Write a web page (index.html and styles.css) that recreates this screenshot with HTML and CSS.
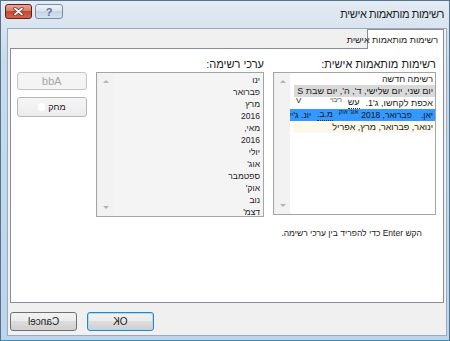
FILE: index.html
```html
<!DOCTYPE html>
<html lang="he" dir="rtl">
<head>
    <meta charset="UTF-8">
    <title>רשימות מותאמות אישית</title>
    <link rel="stylesheet" href="styles.css">
</head>
<body>
    <div class="window">
        <div class="titlebar">
            <span class="title">רשימות מותאמות אישית</span>
            <div class="caption-buttons">
                <div class="cap-btn cap-help">?</div>
                <div class="cap-btn cap-close">
                    <svg width="11" height="9" viewBox="0 0 11 9">
                        <path d="M2 1.5 L9 7.5 M9 1.5 L2 7.5" stroke="#6b2a20" stroke-width="3.2" stroke-linecap="round"/>
                        <path d="M2 1.5 L9 7.5 M9 1.5 L2 7.5" stroke="#fff" stroke-width="1.8" stroke-linecap="round"/>
                    </svg>
                </div>
            </div>
        </div>

        <div class="client">
            <div class="tabs">
                <div class="tab">רשימות מותאמות אישית</div>
            </div>

            <div class="panel">
                <div class="panel-grid">
                    <div class="column">
                        <div class="field-label">רשימות מותאמות אישית:</div>
                        <div class="listbox custom-lists">
                            <div class="items">
                                <div class="row">רשימה חדשה</div>
                                <div class="row row-grey">יום שני, יום שלישי, ד', ה', יום שבת S</div>
                                <div class="row row-mixed">
                                    <span>אכפת לקחשו, ג'1.</span>
                                    <span class="under">עש</span>
                                    <span class="sup">ריבוי</span>
                                    <span class="sup tick">V</span>
                                </div>
                                <div class="row row-mixed row-selected">
                                    <span class="first">יאן.</span>
                                    <span class="tight">פברואר, 2018</span>
                                    <span class="sup">אוג' אוק</span>
                                    <span class="under">מ.ב.</span>
                                    <span>יונ. ג'יי</span>
                                </div>
                                <div class="row row-cream">ינואר, פברואר, מרץ, אפריל</div>
                            </div>
                            <div class="scrollbar">
                                <span class="arrow-up"></span>
                                <span class="arrow-down"></span>
                            </div>
                        </div>
                        <div class="hint">הקש Enter כדי להפריד בין ערכי רשימה.</div>
                    </div>

                    <div class="column">
                        <div class="field-label">ערכי רשימה:</div>
                        <div class="listbox entries">
                            <div class="items entry-items">
                                <div class="row">ינו</div>
                                <div class="row">פברואר</div>
                                <div class="row">מרץ</div>
                                <div class="row">2016</div>
                                <div class="row">מאי,</div>
                                <div class="row">2016</div>
                                <div class="row">יולי</div>
                                <div class="row">אוג'</div>
                                <div class="row">ספטמבר</div>
                                <div class="row">אוק'</div>
                                <div class="row">נוב</div>
                                <div class="row">דצמ'</div>
                            </div>
                            <div class="scrollbar">
                                <span class="arrow-up"></span>
                                <span class="arrow-down"></span>
                            </div>
                        </div>
                    </div>

                    <div class="column side-buttons">
                        <button class="btn btn-disabled"><span class="mirror">Add</span></button>
                        <button class="btn btn-flat"><span class="blob"></span>מחק</button>
                    </div>
                </div>
            </div>

            <div class="footer">
                <button class="btn btn-default"><span class="mirror">OK</span></button>
                <button class="btn"><span class="mirror">Cancel</span></button>
            </div>
        </div>
    </div>
</body>
</html>
```

FILE: styles.css
```css
* {
    box-sizing: border-box;
}
body {
    margin: 0;
    width: 450px;
    height: 341px;
    overflow: hidden;
    font-family: "Liberation Sans", "Noto Sans Hebrew", sans-serif;
    color: #1a1a1a;
    background-color: #c2d8ec;
}
.window {
    height: 341px;
    display: flex;
    flex-direction: column;
    border: 1px solid #56728c;
    border-bottom-color: #2f8fb8;
    background: linear-gradient(#e3ebf3, #d8e4f0 27px, #c6dbee 60px, #bcd5ec);
}
.titlebar {
    height: 27px;
    flex-shrink: 0;
    display: flex;
    align-items: flex-start;
    padding: 0 5px 0 4px;
}
.title {
    font-size: 11px;
    letter-spacing: -0.4px;
    margin-top: 7px;
    color: #1e1e1e;
}
.caption-buttons {
    margin-right: auto;
    margin-top: 3px;
    display: flex;
    gap: 3px;
}
.cap-btn {
    width: 28px;
    height: 15px;
    border: 1px solid #7a8ea3;
    border-radius: 3px;
    display: flex;
    align-items: center;
    justify-content: center;
}
.cap-help {
    background: linear-gradient(#eef3f8, #dbe5ef 45%, #c6d6e6 50%, #d5e1ed);
    color: #5b718a;
    font-size: 11px;
    font-weight: bold;
}
.cap-close {
    width: 27px;
    border-color: #5c2219;
    background: linear-gradient(#eaa899, #d97b68 45%, #c7472f 50%, #d4644c);
}
.client {
    height: 308px;
    margin: 0 2px 0 6px;
    padding: 0 2px;
    background-color: #f0f0f0;
    border: 1px solid #9aabbd;
}
.tabs {
    display: flex;
}
.tab {
    width: 77px;
    height: 20px;
    margin-bottom: -1px;
    position: relative;
    z-index: 1;
    padding: 5px 5px 0 0;
    background-color: #fff;
    border: 1px solid #898c95;
    border-bottom: none;
    font-size: 9px;
    white-space: nowrap;
}
.panel {
    height: 255px;
    padding: 9px 7px 0 5px;
    background-color: #fff;
    border: 1px solid #898c95;
}
.panel-grid {
    display: grid;
    grid-template-columns: 163px 168px 70px;
    column-gap: 9px;
    align-items: start;
}
.column {
    display: flex;
    flex-direction: column;
}
.field-label {
    height: 14px;
    font-size: 11px;
    line-height: 13px;
    white-space: nowrap;
}
.listbox {
    display: flex;
    border: 1px solid #a5a5a5;
    background-color: #fff;
}
.custom-lists {
    height: 143px;
}
.entries {
    height: 145px;
    background-color: #f4f4f4;
}
.items {
    flex: 1;
    min-width: 0;
    font-size: 9px;
}
.row {
    height: 12px;
    line-height: 12px;
    padding-right: 2px;
    white-space: nowrap;
}
.entry-items {
    font-size: 8.5px;
    padding-top: 1px;
}
.entry-items .row {
    padding-right: 3px;
}
.row-grey {
    margin-left: 4px;
    background-color: #d9d9d9;
}
.row-selected {
    background-color: #3399ff;
    color: #101820;
    font-size: 8.5px;
}
.row-cream {
    margin-left: 3px;
    background-color: #fcf8ec;
}
.row-mixed {
    display: flex;
    align-items: flex-start;
    overflow: hidden;
}
.row-mixed span {
    margin-left: 6px;
    flex-shrink: 0;
}
.row-mixed .first {
    margin-left: 9px;
}
.row-mixed .tight {
    margin-left: 3px;
}
.under {
    border-bottom: 1px dotted #333;
    line-height: 11px;
}
.sup {
    font-size: 6px;
    line-height: 7px;
}
.tick {
    margin-right: auto;
    font-size: 8px;
}
.scrollbar {
    width: 16px;
    flex-shrink: 0;
    display: flex;
    flex-direction: column;
    justify-content: space-between;
    align-items: center;
    padding: 7px 0 7px;
    background-color: #f2f2f2;
    border-left: 1px solid #ececec;
}
.arrow-up {
    border: 3px solid transparent;
    border-top: none;
    border-bottom: 3px solid #b4b4b4;
}
.arrow-down {
    border: 3px solid transparent;
    border-bottom: none;
    border-top: 3px solid #b4b4b4;
}
.hint {
    margin-top: 12px;
    padding-right: 14px;
    font-size: 8.5px;
    line-height: 12px;
    white-space: nowrap;
}
.side-buttons {
    padding-top: 14px;
    gap: 7px;
}
.btn {
    height: 19px;
    padding: 0;
    border: 1px solid #707070;
    border-radius: 3px;
    background: linear-gradient(#f2f2f2, #ebebeb 50%, #dddddd 50%, #cfcfcf);
    font-family: "Liberation Sans", "Noto Sans Hebrew", sans-serif;
    font-size: 10px;
    color: #1a1a1a;
}
.btn-disabled {
    height: 18px;
    border-color: #c4c4c4;
    background: #f4f4f4;
    color: #a6a6a6;
    font-size: 11px;
}
.btn-flat {
    height: 20px;
    border-color: #b6b6b6;
    background: linear-gradient(#f6f6f6, #ececec);
    display: flex;
    align-items: center;
    justify-content: center;
    gap: 3px;
    font-size: 9px;
}
.blob {
    width: 7px;
    height: 8px;
    order: 2;
    background-color: #fff;
    border-radius: 3px;
}
.mirror {
    display: inline-block;
    transform: scaleX(-1);
}
.footer {
    display: flex;
    justify-content: flex-end;
    gap: 10px;
    padding: 9px 0 0 0;
}
.footer .btn {
    width: 67px;
}
.btn-default {
    border-color: #3c7fb1;
    box-shadow: inset 0 0 0 1px #a7dcf6;
}
```
